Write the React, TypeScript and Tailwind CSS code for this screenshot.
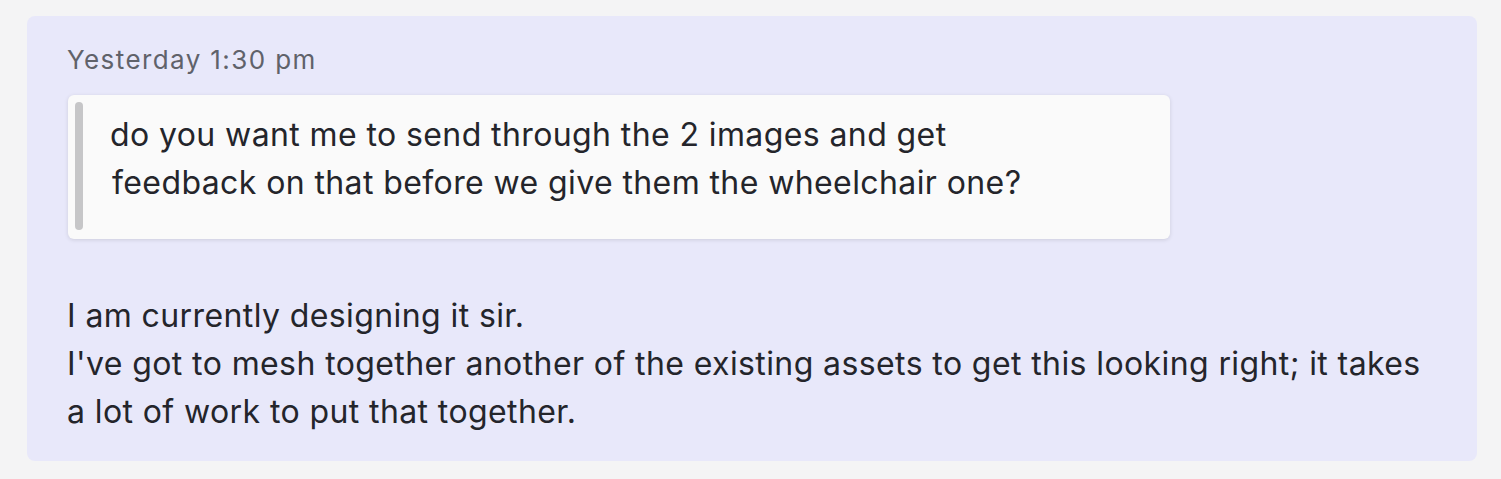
const QuoteBlock = ({ lines }: { lines: string[] }) => (
  <div className="flex h-[144px] w-[1102px] rounded-md bg-[#fafafa] pl-[7px] pt-[7px] pb-[9px] shadow-[0_1px_4px_rgba(0,0,0,0.12)]">
    <div className="w-[8px] shrink-0 rounded-full bg-[#c6c6c8]" />
    <div className="pl-[27px] pt-[9px] text-[32px] leading-[48px] tracking-[0.4px] text-[#24252b]">
      {lines.map((l, i) => (
        <div key={i} className={i === 1 ? "pl-[2px]" : ""}>
          {l}
        </div>
      ))}
    </div>
  </div>
);

export default function App() {
  return (
    <div
      className="min-h-screen bg-[#f4f4f5] pl-[27px] pr-[24px] pt-[16px] pb-[18px]"
      style={{ fontFamily: "Inter, 'Noto Sans', sans-serif" }}
    >
      <div className="rounded-lg bg-[#e8e8fa] pl-[40px] pr-[40px] pt-[28px] pb-[25px]">
        <div className="text-[26px] leading-[32px] tracking-[1.4px] text-[#60626a]">Yesterday 1:30 pm</div>
        <div className="mt-[19px] ml-[1px]">
          <QuoteBlock
            lines={[
              "do you want me to send through the 2 images and get",
              "feedback on that before we give them the wheelchair one?",
            ]}
          />
        </div>
        <div className="mt-[53px] text-[32px] leading-[48px] tracking-[0.4px] text-[#24252b]">
          <div>I am currently designing it sir.</div>
          <div>
            I've got to mesh together another of the existing assets to get this looking right; it takes
            <br />a lot of work to put that together.
          </div>
        </div>
      </div>
    </div>
  );
}
